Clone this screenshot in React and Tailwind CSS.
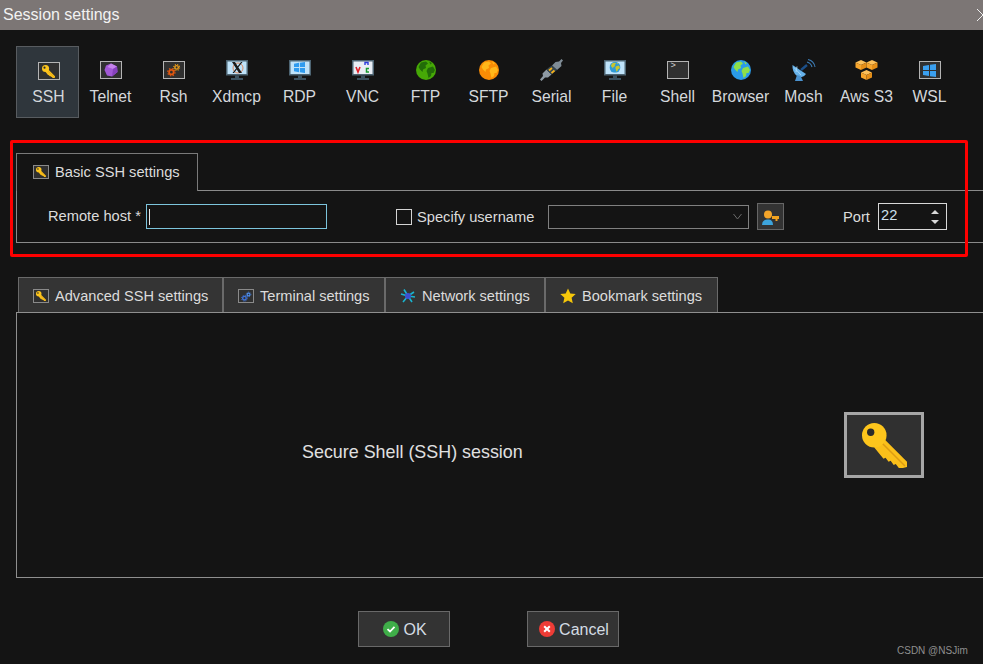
import React from "react";

const Key = ({ s = 14 }) => (
  <svg width={s} height={s} viewBox="0 0 44 44">
    <path d="M19 13 L44 38 L44 43 L40 44 L36 44 L33 40 L31 41 L28 37 L26 38 L23 34 L21 35 L12 24Z" fill="#fabf1a" />
    <path d="M20 20 L42 42" stroke="#dc9c12" strokeWidth="1.5" />
    <circle cx="12" cy="12" r="12" fill="#fdc51c" />
    <circle cx="8.5" cy="9" r="3.6" fill="#2a2a2a" />
  </svg>
);

const Framed = ({ children, w = 22, h = 18, cls = "bg-[#303030]" }) => (
  <div className={`flex items-center justify-center border border-[#b4b4b4] ${cls}`} style={{ width: w, height: h }}>
    {children}
  </div>
);

const Monitor = ({ children, screen = "#bfe3fa" }) => (
  <svg width="22" height="20" viewBox="0 0 22 20">
    <rect x="0" y="0" width="22" height="15.5" fill="#4d6472" />
    <rect x="1.5" y="1.5" width="19" height="12.5" fill={screen} />
    <rect x="9" y="15.5" width="4" height="2.5" fill="#3c5260" />
    <rect x="5" y="18" width="12" height="2" fill="#3c5260" />
    {children}
  </svg>
);

const Globe = ({ base, land, s = 20 }) => (
  <svg width={s} height={s} viewBox="0 0 20 20">
    <circle cx="10" cy="10" r="10" fill={base} />
    <path d="M5 2.5 L10 1.5 L12 3.5 L9.5 5.5 L10 8 L7 9.5 L6.5 12 L4 9.5 L2.5 7Z" fill={land} />
    <path d="M12 8 L17 6.5 L19 10 L17.5 13 L15.5 13 L15 16 L12.5 18 L11.5 13.5 L10.5 11Z" fill={land} />
    <path d="M13 1.5 L16 3 L14.5 4.5Z" fill={land} />
  </svg>
);

const Gears = ({ a, b, s = 16 }) => (
  <svg width={s} height={s} viewBox="0 0 16 16">
    <circle cx="5" cy="10.5" r="2.6" fill="none" stroke={a} strokeWidth="2" />
    <circle cx="5" cy="10.5" r="4.2" fill="none" stroke={a} strokeWidth="1.4" strokeDasharray="1.6 1.7" />
    <circle cx="11" cy="5" r="2" fill="none" stroke={b} strokeWidth="1.7" />
    <circle cx="11" cy="5" r="3.4" fill="none" stroke={b} strokeWidth="1.2" strokeDasharray="1.3 1.4" />
  </svg>
);

const Win = ({ c = "#3aa0f0", s = 13 }) => (
  <svg width={s} height={s} viewBox="0 0 13 13">
    <path d="M0 2 L6 1 V6 H0Z M7 .8 L13 0 V6 H7Z M0 7 H6 V12 L0 11Z M7 7 H13 V13 L7 12.2Z" fill={c} />
  </svg>
);

const Gem = () => (
  <svg width="14" height="14" viewBox="0 0 14 14">
    <path d="M7 0.5 L13 3.5 L13.5 9 L8 13.5 L3 12.5 L0.5 7 L2 2.5Z" fill="#a259d6" />
    <path d="M7 0.5 L13 3.5 L9 6 L3.5 4Z" fill="#c583ec" />
    <path d="M9 6 L13 3.5 L13.5 9 L8 13.5Z" fill="#8741bd" />
  </svg>
);

const Plug = () => (
  <svg width="24" height="22" viewBox="0 0 24 22">
    <path d="M21.5 0 L23 1.5 L21 4 L21.5 7 L17 11 L12 6.5 L15.5 3 L19 2.5Z" fill="#7f8c96" />
    <path d="M1.5 22 L0 20.5 L3 17 L2.5 14.5 L6.5 10.5 L11.5 15.5 L8 18.5 L5 18.5Z" fill="#8e9aa4" />
    <path d="M12 6.5 L17 11 L14.5 13 L11.5 15.5 L6.5 10.5 L9.5 8Z" fill="#35464f" />
    <path d="M9 11.5 L12 9 M11.5 14 L14.5 11.5" stroke="#f4b01a" strokeWidth="1.8" />
  </svg>
);

const Cubes = () => (
  <svg width="23" height="20" viewBox="0 0 23 20">
    {[[0.5, 0], [11.5, 0], [6, 10]].map(([x, y]) => (
      <g key={`${x}-${y}`} transform={`translate(${x} ${y})`}>
        <path d="M5.5 0 L11 2.5 L5.5 5 L0 2.5Z" fill="#fdc05a" />
        <path d="M0 2.5 L5.5 5 V10 L0 7.5Z" fill="#f7a52c" />
        <path d="M11 2.5 L5.5 5 V10 L11 7.5Z" fill="#e58e17" />
      </g>
    ))}
  </svg>
);

const Dish = () => (
  <svg width="24" height="22" viewBox="0 0 24 22">
    <path d="M0.5 6 L14 15 Q11 20 5 17 Q0 13 0.5 6Z" fill="#66b2ea" />
    <path d="M2 8.5 L9 16 M5 7.5 L4 13" stroke="#a9d8f7" strokeWidth="0.9" />
    <path d="M5 16 L3 22 H11 L8.5 17Z" fill="#4a92cf" />
    <path d="M9 11 L15 6" stroke="#1c4f88" strokeWidth="2.4" />
    <path d="M15 3 Q19 4 20 8 M16 0.5 Q22 2 23 8" fill="none" stroke="#3c7cb5" strokeWidth="1.1" />
  </svg>
);

const tools = [
  { n: "SSH", i: <Framed><Key s={13} /></Framed>, active: true },
  { n: "Telnet", i: <Framed><Gem /></Framed> },
  { n: "Rsh", i: <Framed><Gears a="#e1570f" b="#e59a1a" s={14} /></Framed> },
  {
    n: "Xdmcp",
    i: (
      <Monitor>
        <circle cx="12" cy="8" r="5" fill="none" stroke="#e08a60" strokeWidth="1" />
        <path d="M6 2 H9 L16 13 H13Z M15 2 H16.5 L8 13 H6.5Z" fill="#1b1b1b" />
      </Monitor>
    ),
  },
  {
    n: "RDP",
    i: (
      <Monitor>
        <g transform="translate(5 2) scale(0.85)"><Win c="#2e9bef" /></g>
      </Monitor>
    ),
  },
  {
    n: "VNC",
    i: (
      <Monitor screen="#e9eef5">
        <path d="M4 7 L6 12 L8 7" fill="none" stroke="#e0202a" strokeWidth="1.6" />
        <path d="M13 3.8 V2.5 H16 V5 M13 5 V3.5" fill="none" stroke="#2a3bdc" strokeWidth="1.4" />
        <path d="M17 8.5 H14.5 V12 H17" fill="none" stroke="#1a9a30" strokeWidth="1.5" />
      </Monitor>
    ),
  },
  { n: "FTP", i: <Globe base="#46a806" land="#226c08" /> },
  { n: "SFTP", i: <Globe base="#f98c05" land="#ffb71a" /> },
  { n: "Serial", i: <Plug /> },
  {
    n: "File",
    i: (
      <Monitor>
        <g transform="translate(5.5 1.8) scale(0.55)"><Globe base="#2f9ad6" land="#c7c52f" /></g>
      </Monitor>
    ),
  },
  {
    n: "Shell",
    i: (
      <Framed>
        <div className="flex h-full w-full items-start pl-[3px] font-['Liberation_Mono',monospace] text-[9px] leading-[9px] text-[#d0d0d0]">&gt;</div>
      </Framed>
    ),
  },
  { n: "Browser", i: <Globe base="#2a9be8" land="#8ee04a" /> },
  { n: "Mosh", i: <Dish /> },
  { n: "Aws S3", i: <Cubes /> },
  { n: "WSL", i: <Framed><Win /></Framed> },
];

const Tab = ({ icon, label, w }) => (
  <div
    className="flex h-[35px] shrink-0 items-center gap-[6px] border border-b-0 border-[#6a6a6a] bg-[#343434] pl-[14px] pt-[2px]"
    style={{ width: w }}
  >
    {icon}
    <span className="mt-[2px] text-[14.6px]">{label}</span>
  </div>
);

const Small = ({ children }) => (
  <div className="flex h-[14px] w-[16px] items-center justify-center border border-[#8a8a8a] bg-[#303030]">{children}</div>
);

export default function App() {
  return (
    <div className="relative flex h-[664px] w-[983px] flex-col overflow-hidden bg-[#141414] font-['Liberation_Sans',Arial,sans-serif] text-[14.67px] text-[#dcdcdc]">
      <div className="flex h-[30px] shrink-0 items-center justify-between bg-[#7c7675] pl-[3px] text-[16px] text-[#f2f2f2]">
        <span>Session settings</span>
        <svg width="8" height="14" viewBox="0 0 8 14" className="-mr-[1px]">
          <path d="M1 1 L7 7 L1 13" fill="none" stroke="#f0f0f0" strokeWidth="1" />
        </svg>
      </div>

      <div className="ml-4 mt-4 flex h-[72px] shrink-0">
        {tools.map((t) => (
          <div
            key={t.n}
            className={`flex w-[63px] shrink-0 flex-col items-center ${t.active ? "border border-[#585c60] bg-[#2f363c] pl-[2px]" : ""}`}
          >
            <div className="mt-[14px] flex h-[20px] items-center justify-center">{t.i}</div>
            <div className={`whitespace-nowrap text-[15.7px] leading-[18px] text-[#d4d8dc] ${t.active ? "mt-[7px]" : "mt-[8px]"}`}>{t.n}</div>
          </div>
        ))}
      </div>

      <div className="ml-4 mt-[35px] flex h-[38px] shrink-0">
        <div className="z-10 flex h-[38px] w-[182px] items-center gap-[6px] border border-b-0 border-[#7a7a7a] bg-[#141414] pb-[1px] pl-[16px]">
          <Small><Key s={10} /></Small>
          <span>Basic SSH settings</span>
        </div>
      </div>

      <div className="-mt-px ml-4 flex h-[53px] shrink-0 items-center border border-r-0 border-[#8a8a8a]">
        <span className="ml-[31px] w-[98px] shrink-0 whitespace-nowrap pb-[2px]">Remote host *</span>
        <div className="flex h-[25px] w-[181px] shrink-0 items-center border border-[#7cc4dc] pl-[2px]">
          <div className="h-[16px] w-px bg-[#e8e8e8]" />
        </div>
        <div className="ml-[69px] h-[16px] w-[16px] shrink-0 border border-[#d4d4d4]" />
        <span className="ml-[5px] w-[131px] shrink-0 whitespace-nowrap">Specify username</span>
        <div className="flex h-[24px] w-[201px] shrink-0 items-center justify-end border border-[#808080] pr-[6px]">
          <svg width="9" height="7" viewBox="0 0 9 7">
            <path d="M0.5 1 L4.5 6 L8.5 1" fill="none" stroke="#6a6a6a" strokeWidth="1" />
          </svg>
        </div>
        <div className="ml-[8px] flex h-[27px] w-[27px] shrink-0 items-center justify-center border border-[#666] bg-[#333]">
          <svg width="17" height="16" viewBox="0 0 17 16">
            <path d="M0 16 Q0 11 5 10.5 H7 Q11 11 11 16Z" fill="#3da4dc" />
            <circle cx="6" cy="5.5" r="4" fill="#f4a52a" />
            <path d="M10 7 H17 V10 H15.5 V12 H13.5 V10 H10Z" fill="#f2a21e" />
          </svg>
        </div>
        <span className="ml-[59px] w-[35px] shrink-0">Port</span>
        <div className="flex h-[27px] w-[69px] shrink-0 items-center justify-between border border-[#d8d8d8] pb-[3px] pl-[2px] pr-[7px]">
          <span className="text-[#cfe0ee]">22</span>
          <div className="mt-[3px] flex flex-col gap-[6px]">
            <div className="h-0 w-0 border-x-[4px] border-b-[4px] border-x-transparent border-b-[#d8d8d8]" />
            <div className="h-0 w-0 border-x-[4px] border-t-[4px] border-x-transparent border-t-[#d8d8d8]" />
          </div>
        </div>
      </div>

      <div className="ml-[18px] mt-[34px] flex shrink-0">
        <Tab w={205} label="Advanced SSH settings" icon={<Small><Key s={10} /></Small>} />
        <Tab
          w={162}
          label="Terminal settings"
          icon={<Small><Gears a="#3f73d8" b="#4d8be8" s={11} /></Small>}
        />
        <Tab
          w={160}
          label="Network settings"
          icon={
            <svg width="16" height="16" viewBox="0 0 16 16">
              <path d="M8 8 L4 1.5 M8 8 L14 4 M8 8 L15 9 M8 8 L12 14 M8 8 L3 14 M8 8 L1 6" stroke="#19b4cf" strokeWidth="1.6" />
              <circle cx="8" cy="8" r="3" fill="#3c4ed0" />
            </svg>
          }
        />
        <Tab
          w={173}
          label="Bookmark settings"
          icon={
            <svg width="16" height="16" viewBox="0 0 16 16">
              <path d="M8 0.5 L10.3 5.5 L15.7 6 L11.6 9.7 L12.8 15.2 L8 12.4 L3.2 15.2 L4.4 9.7 L0.3 6 L5.7 5.5Z" fill="#f6c70a" />
            </svg>
          }
        />
      </div>

      <div className="ml-4 flex h-[266px] shrink-0 items-center border border-r-0 border-[#8f8f8f]">
        <div className="ml-[285px] mt-[14px] w-[221px] shrink-0 whitespace-nowrap text-[17.9px] text-[#e0e0e0]">Secure Shell (SSH) session</div>
        <div className="ml-[321px] flex h-[66px] w-[80px] shrink-0 items-center justify-center border-[3px] border-[#a6a6a6] bg-[#303030]">
          <Key s={45} />
        </div>
      </div>

      <div className="ml-[358px] mt-[33px] flex shrink-0 gap-[77px] text-[16px]">
        <div className="flex h-[36px] w-[92px] items-center justify-center gap-[4px] border border-[#696969] bg-[#333] pl-[2px] pt-[2px]">
          <svg width="16" height="16" viewBox="0 0 16 16" className="-mt-[2px]">
            <circle cx="8" cy="8" r="8" fill="#3fae49" />
            <path d="M4.5 8.2 L7 10.5 L11.5 5.8" fill="none" stroke="#fff" strokeWidth="1.8" />
          </svg>
          <span className="text-[#d4dce4]">OK</span>
        </div>
        <div className="flex h-[36px] w-[92px] items-center justify-center gap-[4px] border border-[#696969] bg-[#333] pl-[2px] pt-[2px]">
          <svg width="16" height="16" viewBox="0 0 16 16" className="-mt-[2px]">
            <circle cx="8" cy="8" r="8" fill="#ee3c36" />
            <path d="M5.2 5.2 L10.8 10.8 M10.8 5.2 L5.2 10.8" stroke="#fff" strokeWidth="2" />
          </svg>
          <span className="text-[#d4dce4]">Cancel</span>
        </div>
      </div>

      <div className="absolute left-[897px] top-[643px] whitespace-nowrap text-[10px] text-[#8f8f8f]">CSDN @NSJim</div>
      <div className="pointer-events-none absolute left-[10px] top-[140px] h-[117px] w-[958px] rounded-[2px] border-[3px] border-[#fe0000]" />
    </div>
  );
}
